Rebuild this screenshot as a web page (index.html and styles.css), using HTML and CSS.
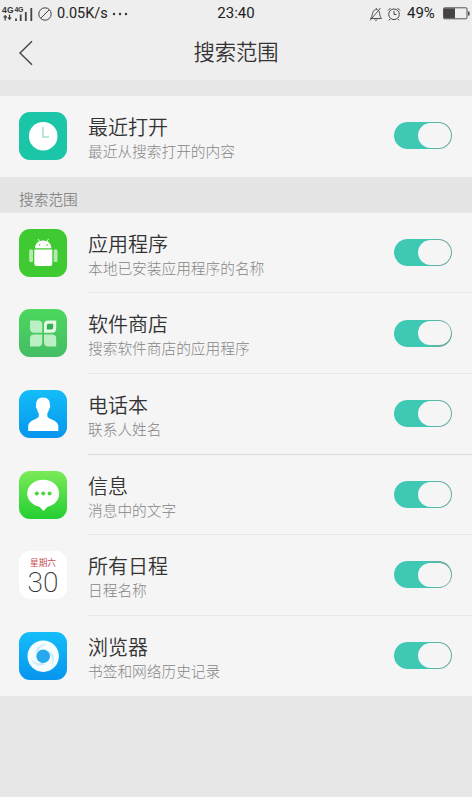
FILE: index.html
```html
<!DOCTYPE html>
<html lang="zh-CN">
<head>
<meta charset="utf-8">
<title>搜索范围</title>
<link rel="stylesheet" href="styles.css">
</head>
<body>
<header class="top">
  <div class="status">
    <div class="status-left">
      <svg class="signal" width="34" height="20" viewBox="0 0 34 20">
        <text class="net" x="2" y="9" textLength="11.500">4G</text>
        <text class="net net-small" x="14.500" y="8" textLength="9">4G</text>
        <path d="M5.200 11v5.500M3.500 13h3.500M9.500 10.500v5.500M7.800 14h3.500" stroke="#444" stroke-width="1.300" fill="none"/>
        <path d="M16 14.500v2.500M20.700 10.500v6.500M25.800 8v9M31.300 4v13" stroke="#444" stroke-width="1.800"/>
      </svg>
      <svg class="blocked" width="14" height="14" viewBox="0 0 14 14" fill="none" stroke="#444"><circle cx="7" cy="7" r="6.200"/><path d="M2.800 11.200L11.200 2.800"/></svg>
      <span class="speed">0.05K/s</span>
      <svg class="dots" width="16" height="4" viewBox="0 0 16 4" fill="#333"><circle cx="2" cy="2" r="1.200"/><circle cx="8" cy="2" r="1.200"/><circle cx="14" cy="2" r="1.200"/></svg>
    </div>
    <div class="clock">23:40</div>
    <div class="status-right">
      <svg width="14" height="14" viewBox="0 0 14 14" fill="none" stroke="#555"><path d="M1.500 11.500c2-2 1.500-5 3-7.500C6 2 9 2 10 4c1 2.500.5 5.500 2.500 7.500zM5.500 12.500c.6 1 2.400 1 3 0M7.300 1v1.500M1 13.500L11.500 1"/></svg>
      <svg class="alarm" width="14" height="14" viewBox="0 0 14 14" fill="none" stroke="#444"><circle cx="7" cy="7.300" r="5.300"/><path d="M7 4v3.500h2.500M1 3.500L3.500 1M10.500 1L13 3.500M3 12l-1 1.300M11 12l1 1.300"/></svg>
      <span class="percent">49%</span>
      <svg class="battery" width="27" height="13" viewBox="0 0 27 13"><rect x=".5" y=".8" width="23.500" height="11" rx="1" fill="none" stroke="#555"/><path d="M1 1.300h11v10H1z" fill="#444"/><path d="M25 4.500h1.500v4H25z" fill="#444"/></svg>
    </div>
  </div>
  <nav class="bar">
    <svg class="back" width="14" height="26" viewBox="0 0 14 26" fill="none" stroke="#444" stroke-width="1.400"><path d="M13 1.200L1 13l12 11.800"/></svg>
    <h1>搜索范围</h1>
  </nav>
</header>
<main>
  <section class="list">
    <div class="row">
      <svg class="icon" viewBox="0 0 48 48"><rect width="48" height="48" rx="11" fill="#1bc5a7"/><circle cx="24.200" cy="24.200" r="14.300" fill="#fff"/><path d="M24 15v10h6" fill="none" stroke="#a4dfce" stroke-width="1.500"/></svg>
      <div class="text"><h2>最近打开</h2><p>最近从搜索打开的内容</p></div><i class="toggle"></i>
    </div>
  </section>
  <h3>搜索范围</h3>
  <section class="list">
    <div class="row">
      <svg class="icon" viewBox="0 0 48 48"><rect width="48" height="48" rx="11" fill="#3fca31"/><path d="M16 19.200c0-4.700 3.500-7.700 8.200-7.700s8.200 3 8.200 7.700zM15.300 20.500h18v14.300q0 2.200-2.200 2.200H17.500q-2.200 0-2.200-2.200z" fill="#fff"/><path d="M19 10l2 3M29.500 10l-2 3" stroke="#e4f8e1"/><g fill="#3fca31"><circle cx="20.500" cy="16" r=".8"/><circle cx="28" cy="16" r=".8"/></g><g fill="#b4eaae"><rect x="10.200" y="20.500" width="3.800" height="12.500" rx="1.200"/><rect x="34.700" y="20.500" width="3.800" height="12.500" rx="1.200"/></g></svg>
      <div class="text"><h2>应用程序</h2><p>本地已安装应用程序的名称</p></div><i class="toggle"></i>
    </div>
    <div class="row">
      <svg class="icon" viewBox="0 0 48 48"><defs><linearGradient id="store" x2="0" y2="1"><stop stop-color="#4cd75d"/><stop offset="1" stop-color="#45bd65"/></linearGradient></defs><rect width="48" height="48" rx="11" fill="url(#store)"/><g fill="#bbf0c5"><path d="M11 11.500h8q4.200 0 4.200 4.200v8H15.200q-4.200 0-4.200-4.200z"/><path d="M15.200 25.500h8v7.800q0 4.200-4.200 4.200h-8v-7.800q0-4.200 4.200-4.200z"/><path d="M25 25.500h8q4.200 0 4.200 4.200v7.800h-8q-4.200 0-4.200-4.200z"/></g><path d="M29 11.500h8.200v8q0 4.200-4.200 4.200h-8v-8q0-4.200 4-4.200z" fill="#e4fae5"/><path d="M29.500 14.700h4.700v3.800q0 2-2 2h-4.400v-4q0-1.800 1.700-1.800z" fill="#36ad54"/></svg>
      <div class="text"><h2>软件商店</h2><p>搜索软件商店的应用程序</p></div><i class="toggle"></i>
    </div>
    <div class="row strong">
      <svg class="icon" viewBox="0 0 48 48"><defs><linearGradient id="blue" x2="0" y2="1"><stop stop-color="#14bdf8"/><stop offset="1" stop-color="#0795ee"/></linearGradient></defs><rect width="48" height="48" rx="11" fill="url(#blue)"/><path d="M24 7.500c4.800 0 7.200 3 6.900 7.500.8 1 .2 3.200-.8 4-.4 2.300-1.300 3.500-1.800 4.500v3c1.500 3 10.200 3.500 11 9v5.500H9.200v-5.500c1-5.500 9-6 10.600-9v-3c-.6-1-1.500-2.200-1.800-4.500-1-.8-1.600-3-.8-4C16.800 10.500 19.200 7.500 24 7.500z" fill="#fff"/></svg>
      <div class="text"><h2>电话本</h2><p>联系人姓名</p></div><i class="toggle"></i>
    </div>
    <div class="row">
      <svg class="icon" viewBox="0 0 48 48"><defs><linearGradient id="message" x2="0" y2="1"><stop stop-color="#7aeb58"/><stop offset="1" stop-color="#24ce32"/></linearGradient></defs><rect width="48" height="48" rx="11" fill="url(#message)"/><path d="M24.200 8.800c9 0 16 6 16 13.700 0 7-5 11.700-11.700 13.200L24.500 40l-4-4.300C13.500 34 8.200 29.500 8.200 22.500c0-7.700 7-13.700 16-13.700z" fill="#fff"/><g fill="#4ed346"><circle cx="17.800" cy="22.500" r="2"/><circle cx="24.200" cy="22.500" r="2"/><circle cx="30.600" cy="22.500" r="2"/></g></svg>
      <div class="text"><h2>信息</h2><p>消息中的文字</p></div><i class="toggle"></i>
    </div>
    <div class="row">
      <div class="icon calendar"><span class="weekday">星期六</span><span class="day">30</span></div>
      <div class="text"><h2>所有日程</h2><p>日程名称</p></div><i class="toggle"></i>
    </div>
    <div class="row">
      <svg class="icon" viewBox="0 0 48 48"><rect width="48" height="48" rx="11" fill="url(#blue)"/><circle cx="24.200" cy="24.200" r="15.700" fill="#f5fdff"/><g fill="#cdecfa"><path d="M16.500 22c-.5-6 5-11 12.500-9.500-5 .5-8.500 3-9.500 7z"/><path d="M16.500 22c-.5-6 5-11 12.500-9.500-5 .5-8.500 3-9.500 7z" transform="rotate(120 24.200 24.200)"/><path d="M16.500 22c-.5-6 5-11 12.500-9.500-5 .5-8.500 3-9.500 7z" transform="rotate(240 24.200 24.200)"/></g><circle cx="24.200" cy="24.200" r="6.800" fill="#27a9ed"/></svg>
      <div class="text"><h2>浏览器</h2><p>书签和网络历史记录</p></div><i class="toggle"></i>
    </div>
  </section>
</main>
</body>
</html>
```
FILE: styles.css
```css
* { box-sizing: border-box; }
body {
  margin: 0;
  min-height: 797px;
  background: #e7e7e7;
  color: #333;
  font-family: Roboto, "Noto Sans CJK SC", sans-serif;
}
h1, h2, h3, p { margin: 0; font-weight: 350; }
svg { display: block; flex: none; }
.top { height: 80px; background: #eee; }
.status {
  display: grid;
  grid-template-columns: 1fr auto 1fr;
  height: 25px;
  padding: 1px 2px 0 0;
  color: #222;
  font-size: 15px;
  line-height: 25px;
}
.status-left, .status-right { display: flex; align-items: center; }
.status-right { justify-content: flex-end; }
.clock { padding-left: 2px; }
.net { font: bold 8.500px "Liberation Sans", sans-serif; fill: #333; }
.net-small { font-size: 7px; }
.blocked { margin-left: 4px; }
.speed { width: 50px; margin-left: 5px; font-size: 14.500px; white-space: nowrap; }
.dots { margin-left: 5px; }
.alarm { margin-left: 4px; }
.percent { width: 30px; margin-left: 6px; }
.battery { margin-left: 6px; }
.bar {
  display: grid;
  grid-template-columns: 38px 1fr 38px;
  align-items: center;
  height: 55px;
  padding: 0 19px;
}
.bar h1 { font-size: 21.300px; line-height: 30px; text-align: center; }
main { padding-top: 16px; }
.list { background: #f5f5f5; }
.row { display: flex; height: 80.600px; padding: 16px 20px 0 19px; background: #f5f5f5; }
.icon { width: 48px; height: 48px; flex: none; }
.text { flex: 1; height: 64.600px; margin-left: 21px; margin-right: -20px; padding-top: 2px; border-bottom: 1px solid #e8e8e8; }
.strong .text { border-bottom-color: #d9d9d9; }
.row:last-child .text { border-bottom: 0; }
.text h2 { font-size: 20px; line-height: 28px; }
.text p { color: #858585; font-size: 14.700px; font-weight: 300; line-height: 21px; }
.toggle {
  display: flex;
  justify-content: flex-end;
  width: 58px;
  height: 27px;
  margin: 10.300px 0 0 -58px;
  padding: 1.200px;
  border-radius: 14px;
  background: linear-gradient(90deg, #3fc9b4 55%, #68aa9e 85%);
}
.toggle::before { content: ""; width: 33px; height: 24.600px; border-radius: 13px; background: #f5f5f5; }
h3 { height: 36.200px; padding: 0 19px; background: #e5e5e5; color: #888; font-size: 14.700px; line-height: 46px; }
.calendar { display: flex; flex-direction: column; align-items: center; border-radius: 11px; background: #fff; }
.weekday { margin-top: 6px; color: #c64b50; font-size: 8.700px; line-height: 13px; }
.day { margin-top: 1px; font-size: 28px; font-weight: 200; line-height: 24px; }
```
